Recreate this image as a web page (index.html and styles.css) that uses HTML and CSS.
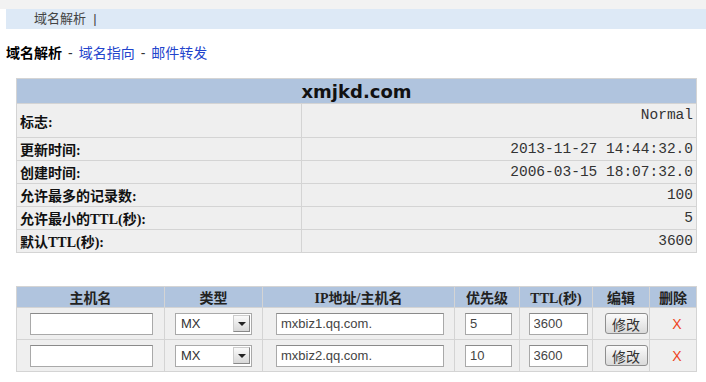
FILE: index.html
```html
<!DOCTYPE html>
<html lang="zh-CN">
  <head>
    <meta charset="UTF-8" />
    <title>域名解析</title>
    <link rel="stylesheet" href="styles.css">
  </head>
  <body>
    <div class="topbar"></div>
    <div class="navbar">域名解析 &nbsp;|</div>
    <div class="subnav">
      <b>域名解析</b><span class="sep">-</span><a href="#">域名指向</a><span class="sep">-</span><a href="#">邮件转发</a>
    </div>
    <div class="main">
      <table class="info">
        <tr>
          <th colspan="2">xmjkd.com</th>
        </tr>
        <tr class="tall">
          <td class="label">标志:</td>
          <td class="value top">Normal</td>
        </tr>
        <tr>
          <td class="label">更新时间:</td>
          <td class="value">2013-11-27 14:44:32.0</td>
        </tr>
        <tr>
          <td class="label">创建时间:</td>
          <td class="value">2006-03-15 18:07:32.0</td>
        </tr>
        <tr>
          <td class="label">允许最多的记录数:</td>
          <td class="value">100</td>
        </tr>
        <tr>
          <td class="label">允许最小的TTL(秒):</td>
          <td class="value">5</td>
        </tr>
        <tr>
          <td class="label">默认TTL(秒):</td>
          <td class="value">3600</td>
        </tr>
      </table>

      <table class="records">
        <tr>
          <th class="c-host">主机名</th>
          <th class="c-type">类型</th>
          <th class="c-ip">IP地址/主机名</th>
          <th class="c-pri">优先级</th>
          <th class="c-ttl">TTL(秒)</th>
          <th class="c-edit">编辑</th>
          <th class="c-del">删除</th>
        </tr>
        <tr>
          <td><input class="in-host" type="text" value="" /></td>
          <td><span class="select"><span class="select-text">MX</span><span class="select-btn"></span></span></td>
          <td><input class="in-ip" type="text" value="mxbiz1.qq.com." /></td>
          <td><input class="in-pri" type="text" value="5" /></td>
          <td><input class="in-ttl" type="text" value="3600" /></td>
          <td><button class="btn">修改</button></td>
          <td class="del">X</td>
        </tr>
        <tr>
          <td><input class="in-host" type="text" value="" /></td>
          <td><span class="select"><span class="select-text">MX</span><span class="select-btn"></span></span></td>
          <td><input class="in-ip" type="text" value="mxbiz2.qq.com." /></td>
          <td><input class="in-pri" type="text" value="10" /></td>
          <td><input class="in-ttl" type="text" value="3600" /></td>
          <td><button class="btn">修改</button></td>
          <td class="del">X</td>
        </tr>
      </table>
    </div>
  </body>
</html>
```

FILE: styles.css
```css
* {
  box-sizing: border-box;
}
body {
  margin: 0;
  font-family: "Liberation Sans", "Noto Sans CJK SC", sans-serif;
  font-size: 13px;
  color: #222;
  background: #fff;
}
.topbar {
  height: 9px;
  background: #f2f2f2;
}
.navbar {
  height: 20px;
  line-height: 20px;
  margin-left: 6px;
  padding-left: 28px;
  background: #dde9f6;
  color: #444;
}
.subnav {
  padding: 15px 6px 0;
  height: 49px;
  line-height: 18px;
  font-size: 14px;
  color: #333;
}
.subnav b {
  color: #000;
}
.subnav a {
  color: #2244cc;
  text-decoration: none;
}
.sep {
  margin: 0 6px;
}
.main {
  padding-left: 16px;
  width: 698px;
}
table {
  width: 681px;
  border-collapse: collapse;
  border: 1px solid #d4d4d4;
}
.info th {
  height: 25px;
  background: #b0c4de;
  font-family: "DejaVu Sans", sans-serif;
  font-size: 18px;
  font-weight: bold;
  color: #111;
  text-align: center;
  padding: 0;
}
.info td {
  height: 23px;
  background: #efefef;
  border: 1px solid #d4d4d4;
  padding: 0 3px;
}
.info .tall td {
  height: 34px;
}
.info .label {
  width: 285px;
  font-family: "Liberation Serif", "Noto Sans CJK SC", serif;
  font-size: 14px;
  font-weight: bold;
  color: #111;
}
.info .value {
  text-align: right;
  font-family: "Liberation Mono", monospace;
  font-size: 14.5px;
  color: #333;
}
.info .top {
  vertical-align: top;
  padding-top: 3px;
}
.records {
  margin-top: 33px;
}
.records th {
  height: 20px;
  background: #b0c4de;
  font-family: "Liberation Serif", "Noto Sans CJK SC", serif;
  font-size: 14px;
  font-weight: bold;
  color: #222;
  text-align: center;
  padding: 0;
  border: 1px solid #d4d4d4;
}
.records td {
  height: 32px;
  background: #efefef;
  border: 1px solid #d4d4d4;
  text-align: center;
  padding: 0;
}
.c-host { width: 148px; }
.c-type { width: 98px; }
.c-ip { width: 192px; }
.c-pri { width: 65px; }
.c-ttl { width: 73px; }
.c-edit { width: 57px; }
.c-del { width: 47px; }
input {
  height: 22px;
  border: 1px solid #a9a9a9;
  border-top-color: #8a8a8a;
  background: #fff;
  font-family: "Liberation Sans", sans-serif;
  font-size: 13px;
  color: #444;
  padding: 0 4px;
  vertical-align: middle;
}
.in-host { width: 123px; margin-left: 2px; }
.in-ip { width: 168px; margin-left: 3px; }
.in-pri { width: 47px; margin-left: 3px; }
.in-ttl { width: 59px; margin-left: 4px; }
.select {
  display: inline-flex;
  align-items: center;
  justify-content: space-between;
  width: 77px;
  height: 22px;
  border: 1px solid #a9a9a9;
  background: #fff;
  padding: 0 1px 0 5px;
  vertical-align: middle;
  color: #333;
}
.select-btn {
  width: 17px;
  height: 17px;
  border: 1px solid #888;
  border-top-color: #ccc;
  border-left-color: #ccc;
  background: linear-gradient(#fafafa, #d8d8d8);
  position: relative;
}
.select-btn::after {
  content: "";
  position: absolute;
  left: 4px;
  top: 6px;
  border-left: 4px solid transparent;
  border-right: 4px solid transparent;
  border-top: 4px solid #222;
}
.btn {
  height: 21px;
  width: 43px;
  padding: 0;
  border: 1px solid #8e8e8e;
  border-radius: 3px;
  background: linear-gradient(#fbfbfb, #dadada);
  font-family: "Noto Sans CJK SC", sans-serif;
  font-size: 14px;
  color: #333;
  margin-left: 10px;
}
.del {
  color: #ee4422;
  font-size: 14px;
  padding-left: 8px !important;
}
```
